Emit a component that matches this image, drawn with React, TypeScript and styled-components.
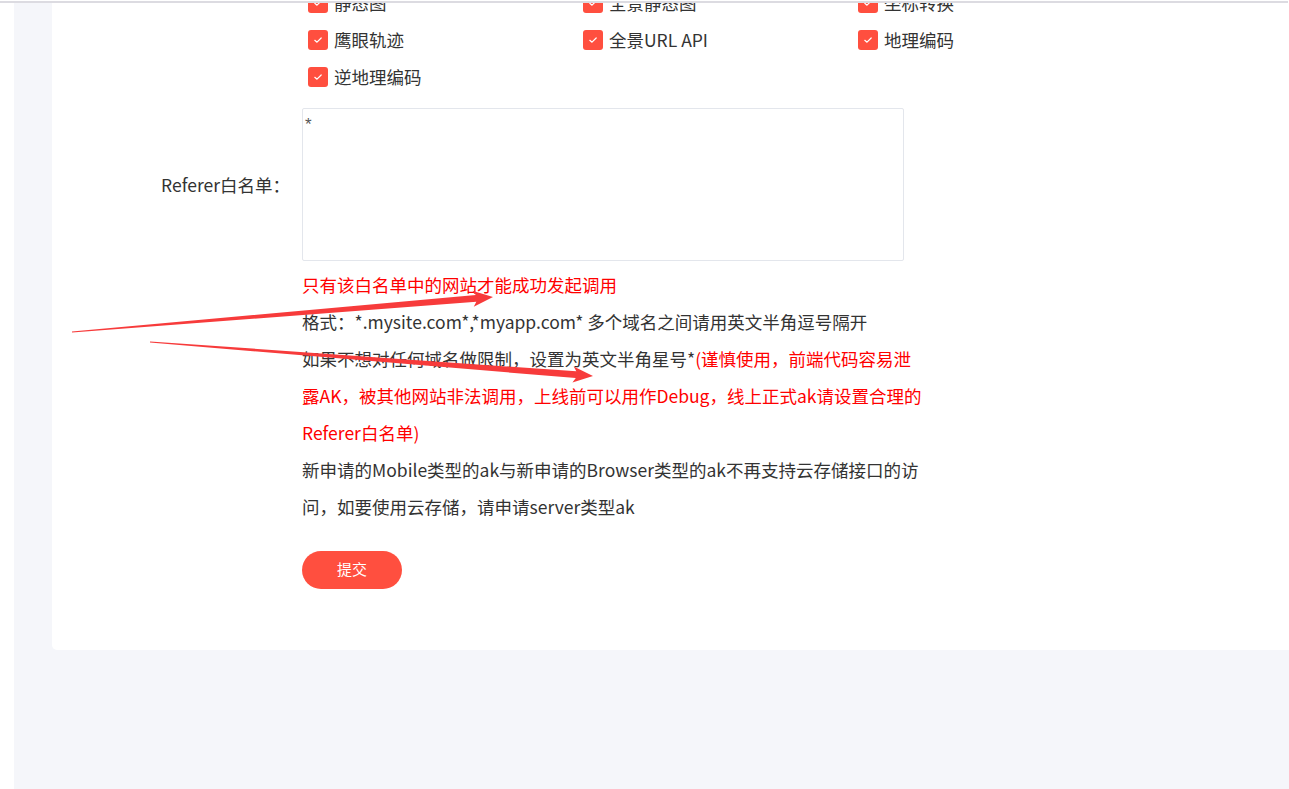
import React from "react";
import styled, { createGlobalStyle } from "styled-components";

const GlobalStyle = createGlobalStyle`
    html, body {
        margin: 0;
        padding: 0;
        background: #fff;
        overflow: hidden;
    }
    body {
        font-family: "Microsoft YaHei", "Noto Sans CJK SC", "Noto Sans", sans-serif;
        color: #333;
    }
`;

type Arrow = { from: [number, number]; to: [number, number] };

const arrows: Arrow[] = [
    { from: [72, 332], to: [493, 297] },
    { from: [150, 342], to: [593, 376] },
];

const services = [
    ["静态图", "全景静态图", "坐标转换"],
    ["鹰眼轨迹", "全景URL API", "地理编码"],
    ["逆地理编码"],
];

// tapered shaft + triangle head, like a hand drawn annotation arrow
function arrowPoints({ from, to }: Arrow) {
    const [tx, ty] = from;
    const [hx, hy] = to;
    const len = Math.hypot(hx - tx, hy - ty);
    const ux = (hx - tx) / len;
    const uy = (hy - ty) / len;
    const nx = -uy;
    const ny = ux;
    const headLen = 17;
    const bx = hx - ux * headLen;
    const by = hy - uy * headLen;
    const fx = bx - ux * 3;
    const fy = by - uy * 3;
    const p = (x: number, y: number, w: number) => `${x + nx * w},${y + ny * w}`;
    return [
        p(tx, ty, 0.6),
        p(bx, by, 3.4),
        p(fx, fy, 8),
        `${hx},${hy}`,
        p(fx, fy, -8),
        p(bx, by, -3.4),
        p(tx, ty, -0.6),
    ].join(" ");
}

export default function App() {
    return (
        <>
            <GlobalStyle />
            <TopRule />
            <Main>
                <Card>
                    <FormItem>
                        <Label />
                        <CheckGroup>
                            {services.flat().map((name) => (
                                <CheckItem key={name}>
                                    <CheckBox>
                                        <svg width="12" height="12" viewBox="0 0 12 12">
                                            <path
                                                d="M2.8 6.3 L5 8.2 L9.2 4"
                                                fill="none"
                                                stroke="#fff"
                                                strokeWidth="1.2"
                                                strokeLinecap="round"
                                                strokeLinejoin="round"
                                            />
                                        </svg>
                                    </CheckBox>
                                    {name}
                                </CheckItem>
                            ))}
                        </CheckGroup>
                    </FormItem>

                    <FormItem center>
                        <Label>Referer白名单：</Label>
                        <RefererInput defaultValue="*" />
                    </FormItem>

                    <FormItem>
                        <Label />
                        <Hints>
                            <Hint warn>只有该白名单中的网站才能成功发起调用</Hint>
                            <Hint>格式：*.mysite.com*,*myapp.com* 多个域名之间请用英文半角逗号隔开</Hint>
                            <Hint>
                                如果不想对任何域名做限制，设置为英文半角星号*
                                <Warn>
                                    (谨慎使用，前端代码容易泄
                                    <br />
                                    露AK，被其他网站非法调用，上线前可以用作Debug，线上正式ak请设置合理的
                                    <br />
                                    Referer白名单)
                                </Warn>
                            </Hint>
                            <Hint>
                                新申请的Mobile类型的ak与新申请的Browser类型的ak不再支持云存储接口的访
                                <br />
                                问，如要使用云存储，请申请server类型ak
                            </Hint>
                        </Hints>
                    </FormItem>

                    <FormItem>
                        <Label />
                        <div>
                            <SubmitButton>提交</SubmitButton>
                        </div>
                    </FormItem>
                </Card>

                <ArrowLayer width="1289" height="789" viewBox="0 0 1289 789">
                    {arrows.map((a, i) => (
                        <polygon key={i} points={arrowPoints(a)} fill="#f73b3b" />
                    ))}
                </ArrowLayer>
            </Main>
        </>
    );
}

const TopRule = styled.div`
    position: fixed;
    top: 0;
    left: 0;
    width: 1288px;
    height: 1px;
    border-bottom: 2px solid #dcdbe1;
    background: #fff;
    z-index: 5;
`;

const Main = styled.div`
    position: relative;
    display: flow-root;
    margin-left: 14px;
    padding-left: 38px;
    min-height: 789px;
    background: #f5f6fa;
`;

const Card = styled.div`
    margin-top: -16px;
    padding-bottom: 61px;
    background: #fff;
    border-radius: 0 0 0 5px;
`;

const FormItem = styled.div<{ center?: boolean }>`
    display: grid;
    grid-template-columns: 238px 1fr;
    column-gap: 12px;
    align-items: ${(p) => (p.center ? "center" : "start")};
`;

const Label = styled.div`
    text-align: right;
    font-size: 17.5px;
    color: #333;
`;

const CheckGroup = styled.div`
    display: grid;
    grid-template-columns: repeat(3, 275px);
    padding-left: 6px;
    margin-bottom: 13px;
`;

const CheckItem = styled.label`
    display: flex;
    align-items: center;
    gap: 6px;
    height: 37px;
    font-size: 17.5px;
    line-height: 1;
    color: #333;
`;

const CheckBox = styled.span`
    display: flex;
    align-items: center;
    justify-content: center;
    width: 20px;
    height: 20px;
    border-radius: 3px;
    background: #ff4f3f;
`;

const RefererInput = styled.textarea`
    box-sizing: border-box;
    width: 602px;
    height: 153px;
    padding: 7px 2px;
    border: 1px solid #e3e6ec;
    border-radius: 2px;
    resize: none;
    outline: none;
    font-family: "Liberation Sans", sans-serif;
    font-size: 17px;
    line-height: 18px;
    color: #555;
`;

const Hints = styled.div`
    margin-top: 5px;
`;

const Hint = styled.div<{ warn?: boolean }>`
    font-size: 17.5px;
    line-height: 37px;
    white-space: nowrap;
    color: ${(p) => (p.warn ? "#ff0000" : "#333")};
`;

const Warn = styled.span`
    color: #ff0000;
`;

const SubmitButton = styled.button`
    margin-top: 26px;
    width: 100px;
    height: 38px;
    padding: 0 0 3px;
    border: none;
    border-radius: 19px;
    background: #ff4f3f;
    color: #fff;
    font-family: inherit;
    font-size: 15px;
    cursor: pointer;
`;

const ArrowLayer = styled.svg`
    position: absolute;
    top: 0;
    left: -14px;
    pointer-events: none;
`;
